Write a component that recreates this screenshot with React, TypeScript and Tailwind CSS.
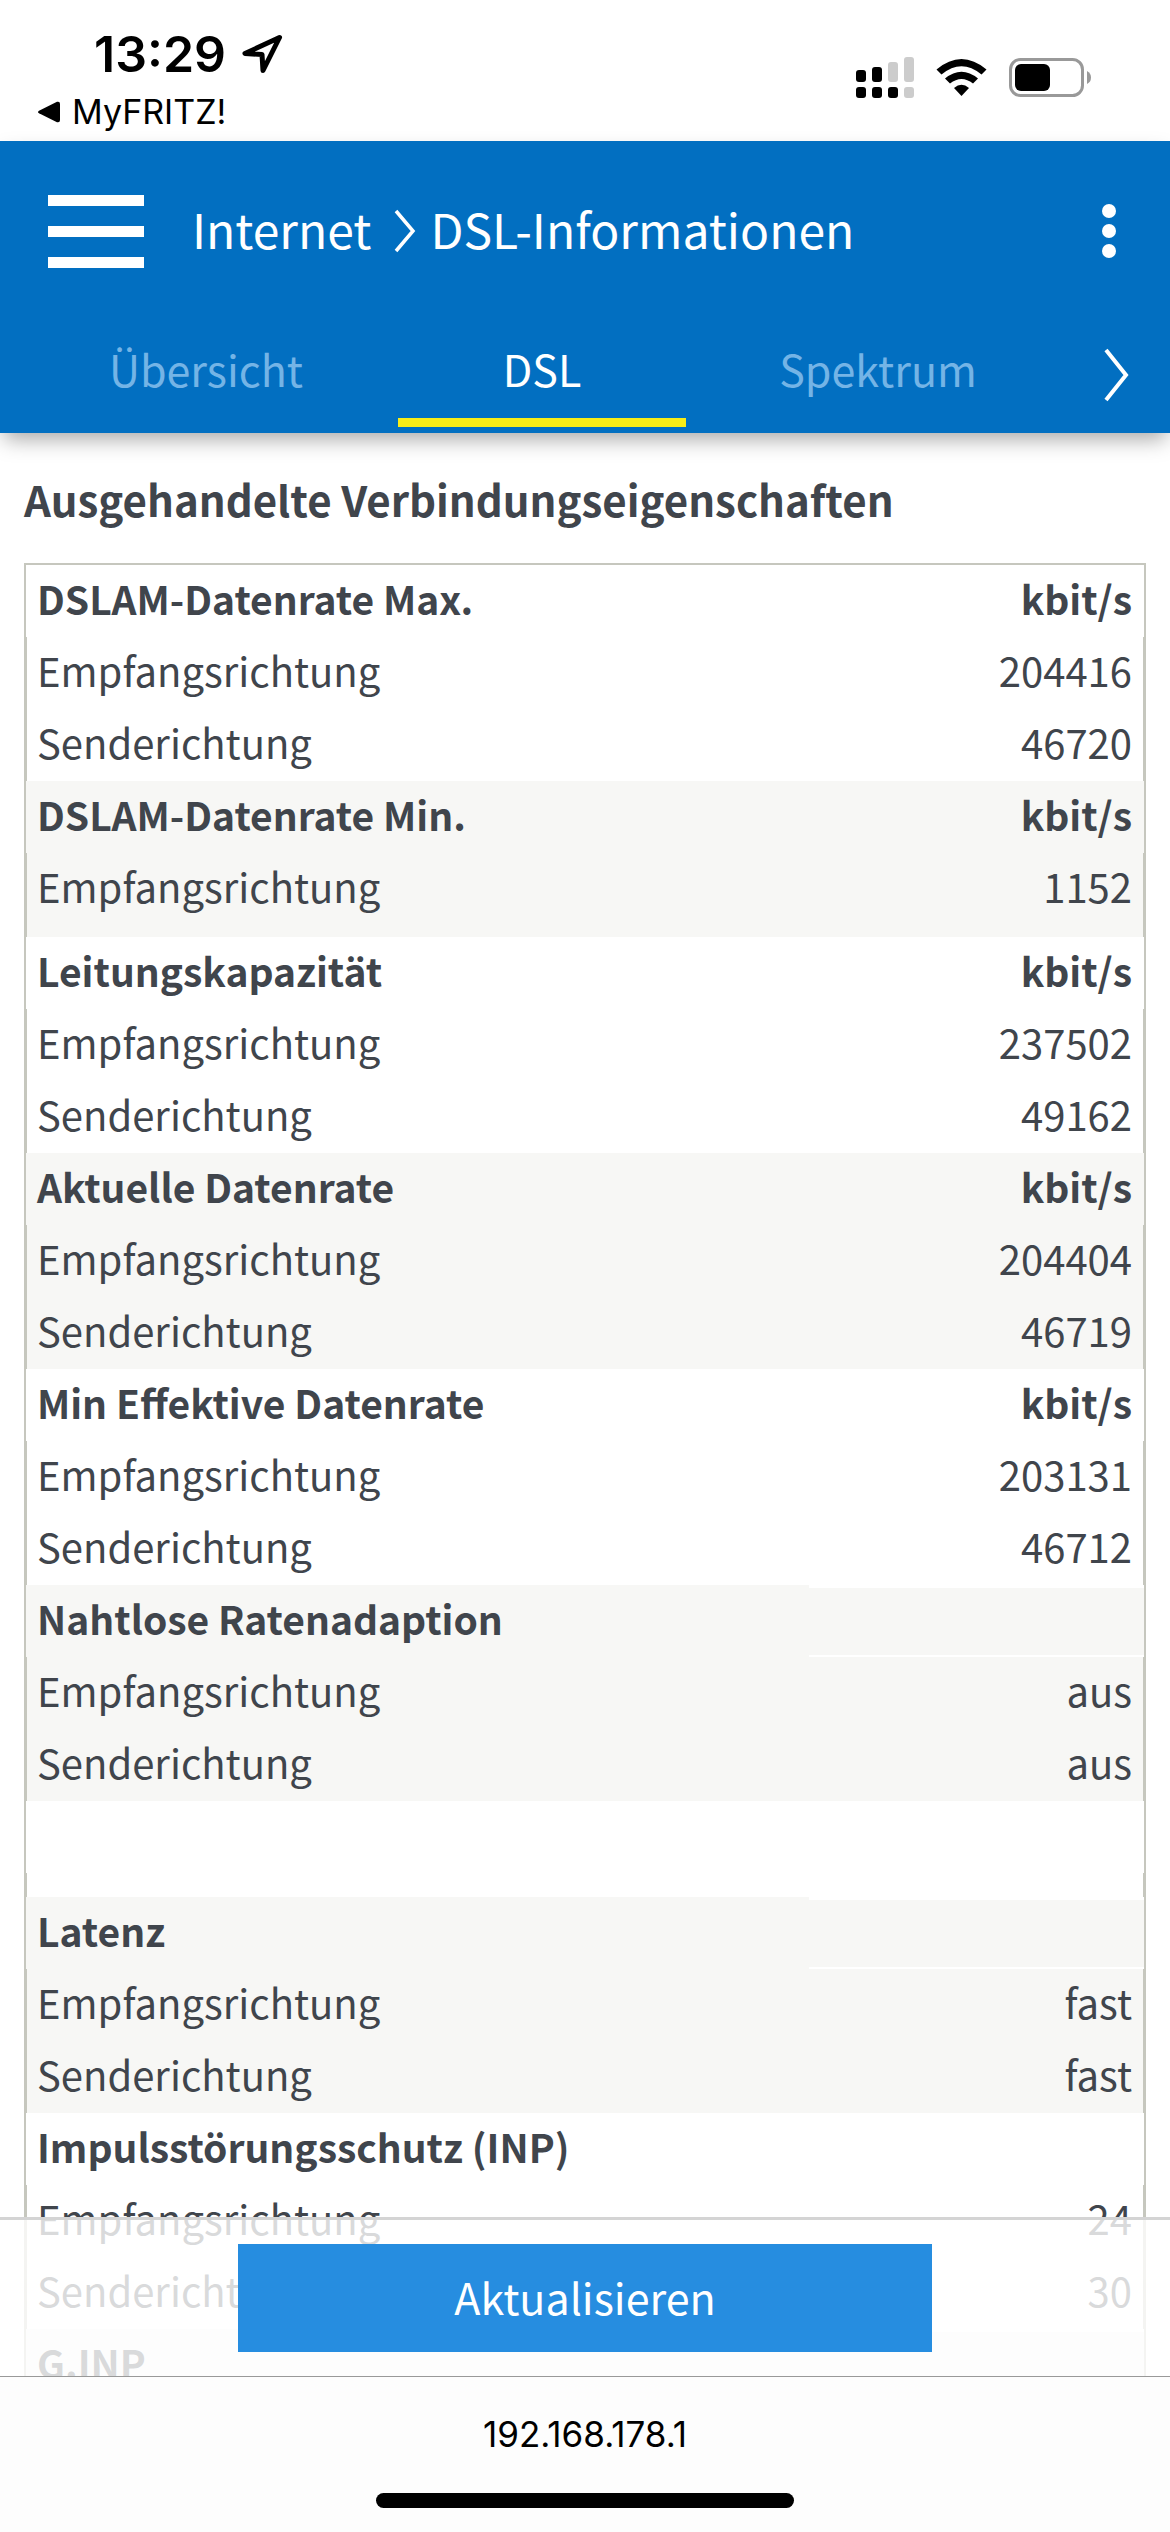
import React from "react";

type Row = { label: string; value: string };
type Section = { title: string; unit: string; rows: Row[]; extra?: "row" | "gap" };

const rate = (down: string, up?: string): Row[] =>
  up === undefined
    ? [{ label: "Empfangsrichtung", value: down }]
    : [
        { label: "Empfangsrichtung", value: down },
        { label: "Senderichtung", value: up },
      ];

const sections: Section[] = [
  { title: "DSLAM-Datenrate Max.", unit: "kbit/s", rows: rate("204416", "46720") },
  { title: "DSLAM-Datenrate Min.", unit: "kbit/s", rows: rate("1152"), extra: "row" },
  { title: "Leitungskapazität", unit: "kbit/s", rows: rate("237502", "49162") },
  { title: "Aktuelle Datenrate", unit: "kbit/s", rows: rate("204404", "46719") },
  { title: "Min Effektive Datenrate", unit: "kbit/s", rows: rate("203131", "46712") },
  { title: "Nahtlose Ratenadaption", unit: "", rows: rate("aus", "aus") },
  { title: "", unit: "", rows: [], extra: "gap" },
  { title: "Latenz", unit: "", rows: rate("fast", "fast") },
  { title: "Impulsstörungsschutz (INP)", unit: "", rows: rate("24", "30") },
  { title: "G.INP", unit: "", rows: [] },
];

function StatusBar() {
  return (
    <div className="flex h-[141px] shrink-0 items-start justify-between bg-white font-['Inter',sans-serif] text-black">
      <div className="flex flex-col pt-[24px] pl-[38px]">
        <div className="flex items-center gap-[16px] pl-[56px]">
          <span className="text-[50px] leading-[60px] font-semibold">13:29</span>
          <svg className="h-[40px] w-[42px]" viewBox="0 0 42 40" fill="none" aria-hidden="true">
            <path d="M37.500 3.500 3 19.500 20 20.500 21 36.500Z" stroke="#000" strokeWidth="5" strokeLinejoin="round" />
          </svg>
        </div>
        <a href="#myfritz" className="flex items-center gap-[12px] text-[34px] leading-[56px]">
          <svg className="h-[22px] w-[22px]" viewBox="0 0 22 22" aria-hidden="true">
            <path d="M1 9.7 19 .8Q22 0 22 3V19Q22 22 19 21.2L1 12.3Q-1 11 1 9.7Z" fill="#000" />
          </svg>
          MyFRITZ!
        </a>
      </div>
      <svg className="mt-[56px] mr-[79px] h-[42px] w-[235px]" viewBox="856 56 235 42" aria-hidden="true">
        <g fill="#000">
          <rect x="856" y="70" width="10" height="12" rx="3" />
          <rect x="872" y="67" width="10" height="15" rx="3" />
          <rect x="856" y="87" width="10" height="11" rx="3" />
          <rect x="872" y="87" width="10" height="11" rx="3" />
          <rect x="888" y="87" width="10" height="11" rx="3" />
        </g>
        <g fill="#ccc">
          <rect x="888" y="62" width="10" height="20" rx="3" />
          <rect x="904" y="57" width="10" height="25" rx="3" />
          <rect x="904" y="87" width="10" height="11" rx="3" />
        </g>
        <path d="M936.500 69.500Q961.500 48.500 986.500 69.500L981.500 74.500Q961.500 58 941.500 74.500Z" />
        <path d="M945 78.500Q961.500 65 978 78.500L973 83.500Q961.500 74.500 950 83.500Z" />
        <path d="M954 88Q961.500 81.500 969 88L961.500 96Z" />
        <rect x="1010.500" y="59.500" width="72" height="36" rx="10" fill="none" stroke="#999" strokeWidth="3" />
        <rect x="1015" y="64" width="35" height="27" rx="6" />
        <path d="M1087 71Q1091 73 1091 77.500Q1091 82 1087 84Z" fill="#999" />
      </svg>
    </div>
  );
}

function Header() {
  return (
    <header className="relative z-10 flex h-[292px] shrink-0 flex-col bg-[#026fc1] text-white shadow-[0_10px_20px_-4px_rgba(0,0,0,0.35)]">
      <div className="flex h-[180px] items-center px-[48px]">
        <button type="button" aria-label="Menü" className="flex w-[96px] flex-col gap-[20px]">
          <span className="h-[11px] bg-white" />
          <span className="h-[11px] bg-white" />
          <span className="h-[11px] bg-white" />
        </button>
        <h1 className="ml-[48px] flex items-center text-[48px] leading-[72px]">
          <a href="#internet" className="pb-[6px]">Internet</a>
          <svg className="mr-[13px] ml-[22px] h-[44px] w-[24px]" viewBox="0 0 24 44" fill="none" aria-hidden="true">
            <path d="M3 2 20 22 3 42" stroke="#fff" strokeWidth="3.500" />
          </svg>
          <span className="pb-[6px]">DSL-Informationen</span>
        </h1>
        <button type="button" aria-label="Weitere Optionen" className="ml-auto flex w-[26px] flex-col items-center gap-[6px]">
          <span className="h-[14px] w-[14px] rounded-full bg-white" />
          <span className="h-[14px] w-[14px] rounded-full bg-white" />
          <span className="h-[14px] w-[14px] rounded-full bg-white" />
        </button>
      </div>
      <nav className="flex flex-1 items-stretch pr-[40px] pl-[62px] text-[43px] leading-[94px]">
        <div className="grid w-[960px] grid-cols-3 gap-[48px] text-center">
          <a href="#uebersicht" className="h-[106px] border-b-[9px] border-transparent text-[#74b4e6]">Übersicht</a>
          <a href="#dsl" className="h-[106px] border-b-[9px] border-[#f8ed17]">DSL</a>
          <a href="#spektrum" className="h-[106px] border-b-[9px] border-transparent text-[#74b4e6]">Spektrum</a>
        </div>
        <button type="button" aria-label="Weitere Reiter" className="ml-auto pb-[4px]">
          <svg className="h-[54px] w-[26px]" viewBox="0 0 26 54" fill="none" aria-hidden="true">
            <path d="M2 2 22 27 2 52" stroke="#fff" strokeWidth="4" />
          </svg>
        </button>
      </nav>
    </header>
  );
}

function SectionRows({ section, shaded }: { section: Section; shaded: boolean }) {
  const bg = shaded ? "bg-[#f7f7f5]" : "bg-white";
  if (section.extra === "gap") {
    return (
      <tbody className={bg}>
        <tr>
          <td colSpan={2} className="h-[72px]" />
        </tr>
        <tr>
          <td colSpan={2} className="h-[24px] border-x border-[#c6c7be]" />
        </tr>
      </tbody>
    );
  }
  const pad = section.extra ? "pb-[18px]" : "pb-[6px]";
  return (
    <tbody className={bg}>
      <tr className="text-[39px]">
        <th scope="colgroup" className="pb-[6px] pl-[11px] text-left font-bold">
          {section.title}
        </th>
        {section.unit ? (
          <th scope="col" className="pr-[12px] pb-[6px] text-right font-bold">{section.unit}</th>
        ) : (
          <td className="border-t-[3px] border-b-2 border-white" />
        )}
      </tr>
      {section.rows.map((row) => (
        <tr key={row.label}>
          <th scope="row" className={`border-l border-[#c6c7be] pl-[10px] text-left font-normal ${pad}`}>
            {row.label}
          </th>
          <td className={`border-r border-[#c6c7be] pr-[11px] text-right ${pad}`}>{row.value}</td>
        </tr>
      ))}
    </tbody>
  );
}

export default function App() {
  return (
    <div className="flex h-screen flex-col overflow-hidden bg-white font-['Noto_Sans_CJK_SC','Source_Sans_Pro',sans-serif] text-[#40454c]">
      <StatusBar />
      <Header />
      <main className="relative flex-1 overflow-hidden">
        <div className="px-[24px] pt-[30px]">
          <h2 className="mb-[28px] text-[42px] leading-[72px] font-bold">Ausgehandelte Verbindungseigenschaften</h2>
          <div className="border-2 border-[#c6c7be]">
            <table className="w-full table-fixed border-separate border-spacing-0 text-[40px] leading-[66px]">
              <colgroup>
                <col className="w-[70%]" />
                <col className="w-[30%]" />
              </colgroup>
              {sections.map((section, i) => (
                <SectionRows key={i} section={section} shaded={i % 2 === 1} />
              ))}
            </table>
          </div>
        </div>
        <div className="absolute inset-x-0 bottom-0 flex justify-center border-t-[3px] border-[#d4d4d4] bg-white/80 py-[24px]">
          <button type="button" className="h-[108px] w-[694px] bg-[#268de0] pb-[4px] text-[43px] text-white">
            Aktualisieren
          </button>
        </div>
      </main>
      <footer className="flex h-[156px] shrink-0 flex-col items-center justify-between border-t border-[#999] bg-[#fdfdfd] pt-[37px] pb-[24px] font-['Inter',sans-serif] text-[35px] leading-[40px] text-black">
        <span>192.168.178.1</span>
        <div className="h-[15px] w-[418px] rounded-full bg-black" />
      </footer>
    </div>
  );
}
